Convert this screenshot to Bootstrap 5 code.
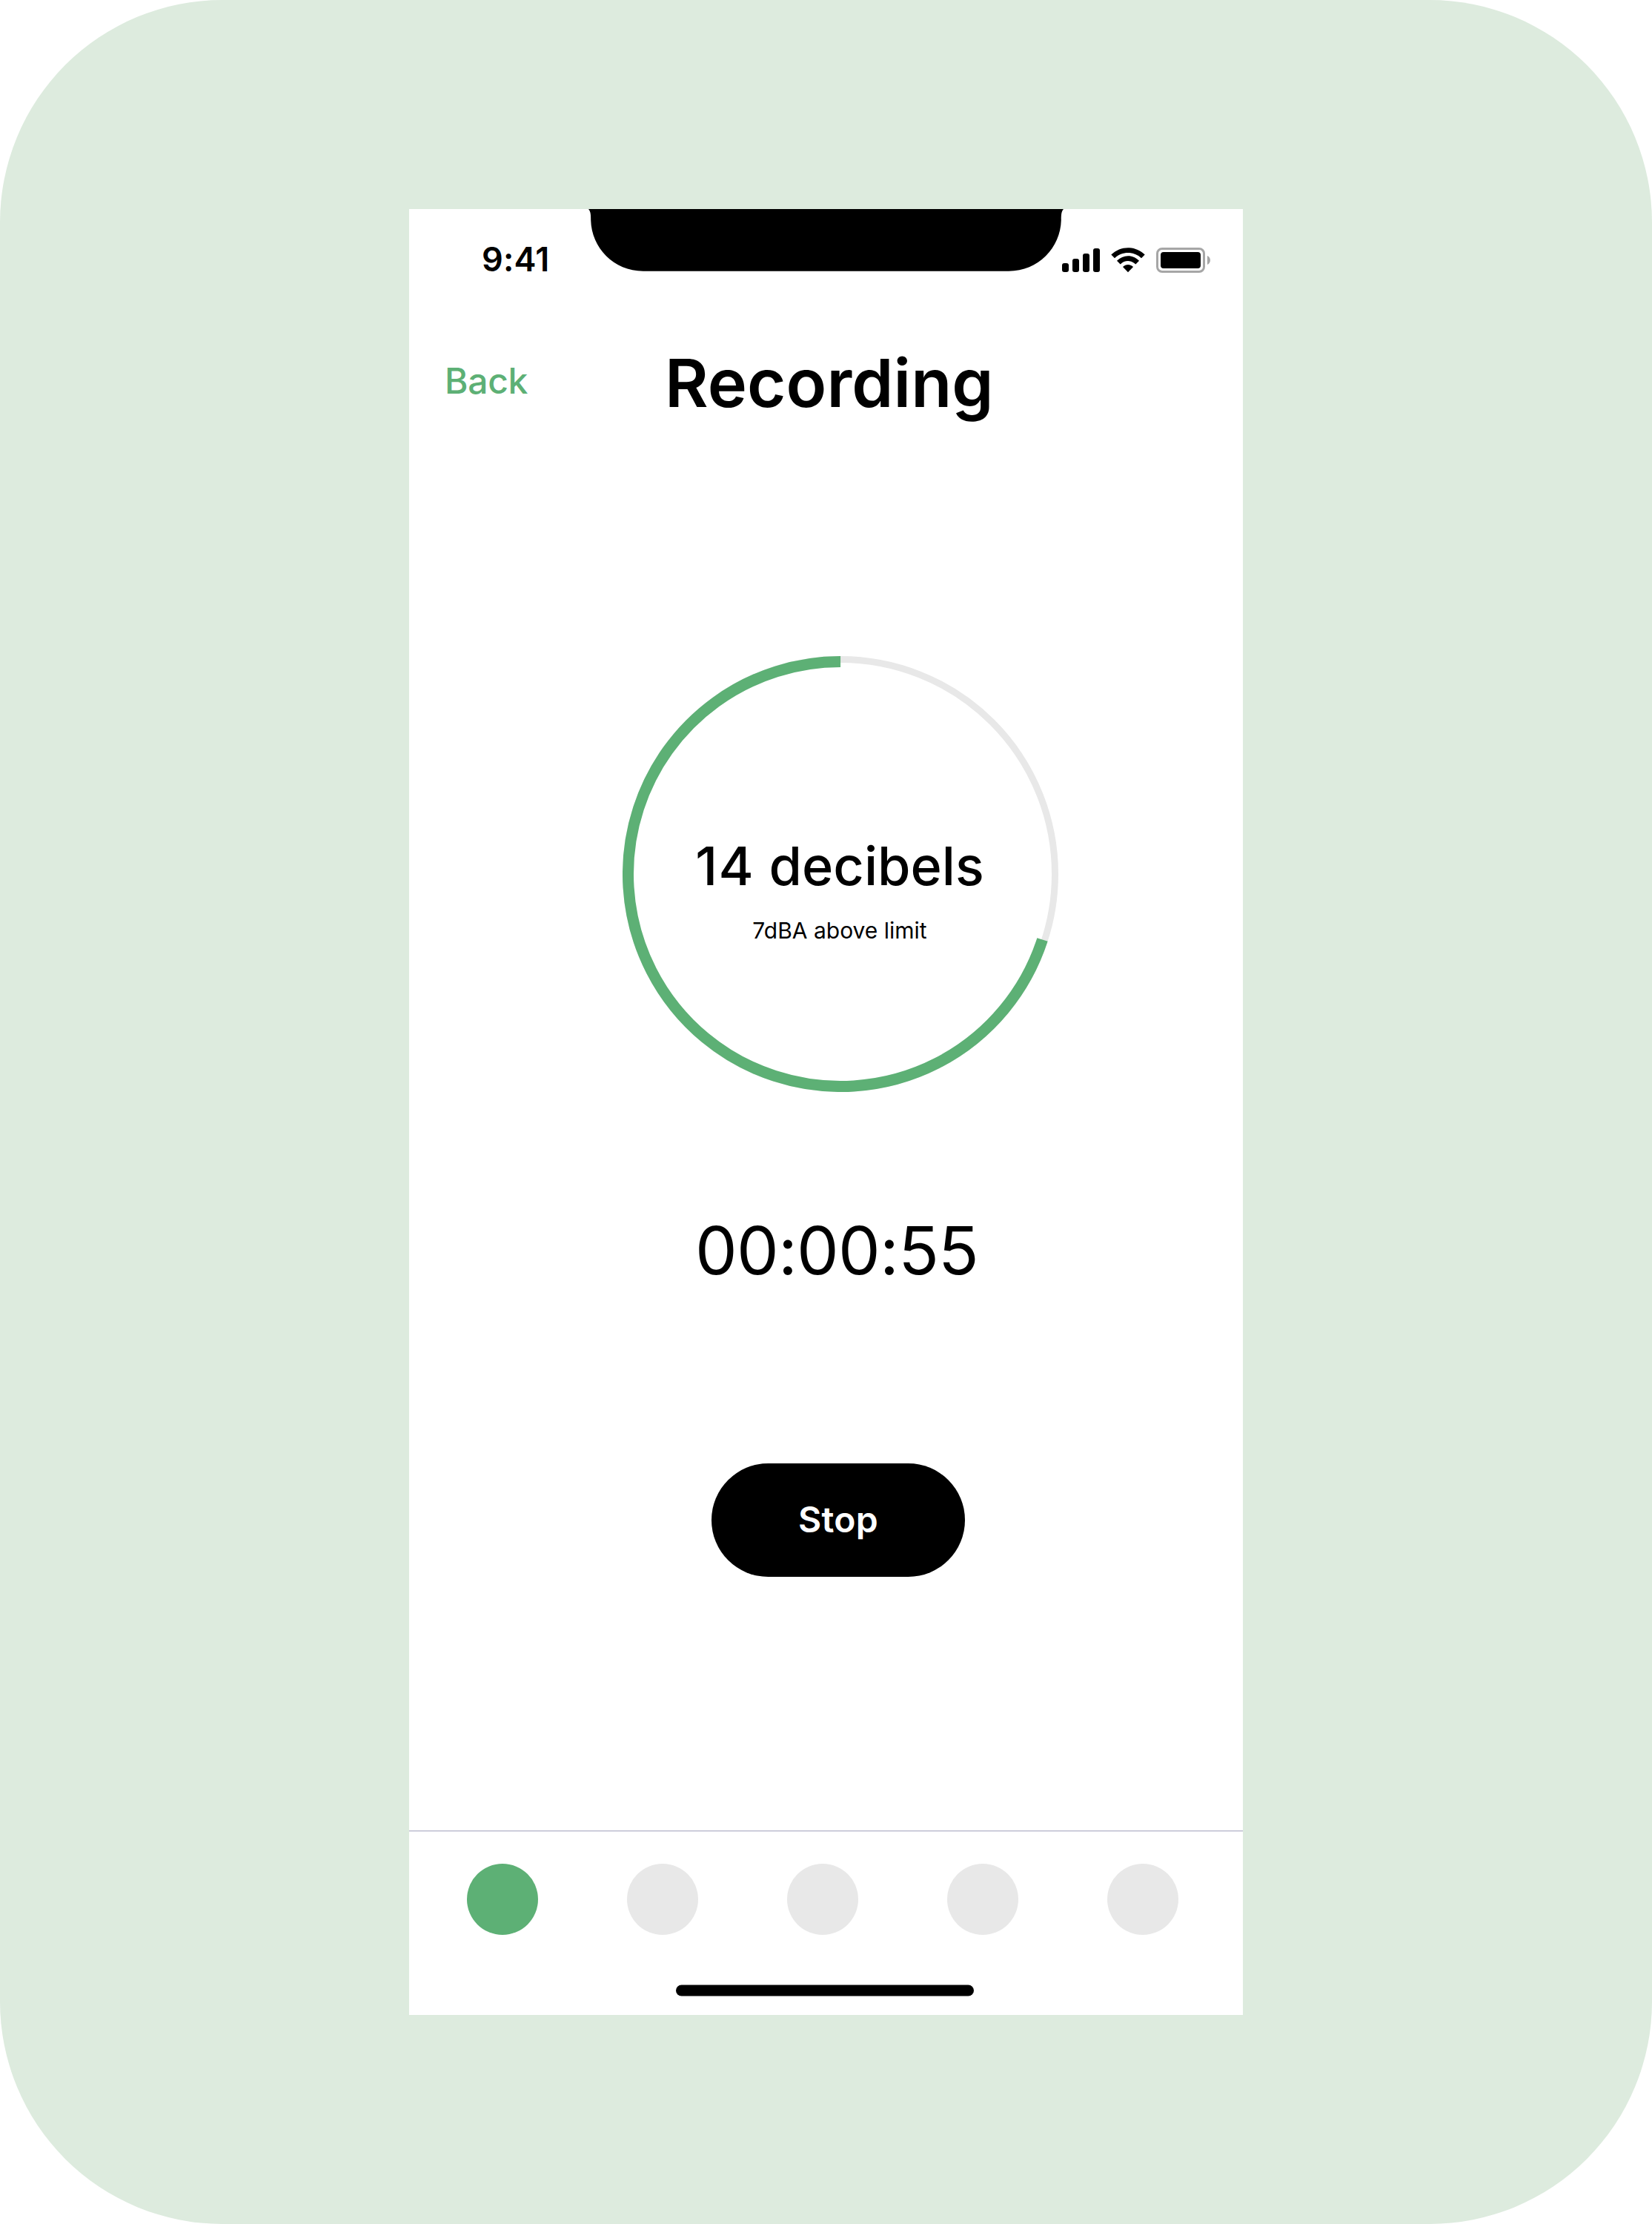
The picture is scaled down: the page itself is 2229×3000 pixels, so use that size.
<!DOCTYPE html>
<html lang="en">
<head>
<meta charset="utf-8">
<title>Recording</title>
<link href="https://cdn.jsdelivr.net/npm/bootstrap@5.3.0/dist/css/bootstrap.min.css" rel="stylesheet">
<style>
body{font-family:Inter,sans-serif;color:#000;background:#fff}
.stage{width:2229px;height:3000px;background:#ddebde;border-radius:300px;padding-top:282px}
.phone{width:1125px;height:2436px;margin-left:552px;background:#fff}
.status{height:132px;padding-left:98px}
.clock{font-size:45px;font-weight:600;line-height:54px;padding-top:41px;width:144px;letter-spacing:.2px}
.titlebar{height:198px}
.back{font-size:48px;font-weight:500;line-height:58px;color:#5db075;text-decoration:none;padding:71px 0 0 48px;width:345px;letter-spacing:-.3px}
.heading{font-size:90px;font-weight:600;line-height:110px;margin:48px 0 0;letter-spacing:.1px}
.dial{width:588px;height:588px;margin:273px 0 0 288px}
.reading{top:239px;left:-1px}
.level{font-size:72px;font-weight:500;line-height:87px}
.count{letter-spacing:1.5px}
.note{font-size:30px;line-height:36px;margin-top:26px}
.timer{font-size:90px;line-height:108px;margin:160px 0 0 386px;letter-spacing:-.8px}
.stop-btn,.stop-btn:hover{width:342px;height:153px;background:#000;color:#fff;font-size:48px;font-weight:600;letter-spacing:.3px;margin:233px 0 0 408px;padding:0 0 2px}
.tabs{height:249px;border-top:1px solid #bdbdcf;box-shadow:inset 0 1px #dedee8}
.dots{gap:120px;padding:44px 0 0 78px}
.dot{width:96px;height:96px;background:#e8e8e8}
.dot.on{background:#5db075}
.home{width:402px;margin:67px 0 0 360px}
</style>
<script src="https://cdn.jsdelivr.net/npm/bootstrap@5.3.0/dist/js/bootstrap.bundle.min.js"></script>
</head>
<body>
<main class="stage">
<section class="phone d-flex flex-column overflow-hidden">
  <header class="status d-flex flex-shrink-0">
    <div class="clock flex-shrink-0">9:41</div>
    <svg class="flex-shrink-0" width="639" height="84" viewBox="794 282 639 84" overflow="visible"><path d="M794 282C797 285 797.200 290 797.200 297C798 334 828 365.700 868 365.700H1361C1401 365.700 1431 334 1431.800 297C1431.800 290 1432 285 1435 282Z"/></svg>
    <svg class="flex-shrink-0" width="206" height="94" viewBox="1433 282 206 94">
      <rect x="1433" y="355" width="9" height="12" rx="3"/>
      <rect x="1447" y="349" width="9" height="18" rx="3"/>
      <rect x="1461" y="342" width="9" height="25" rx="3"/>
      <rect x="1475" y="335" width="9" height="32" rx="3"/>
      <path d="M1499.300 343.500C1512 331 1532 331 1544.700 343.500L1540 348.300C1530 338.600 1514 338.600 1504 348.300Z"/>
      <path d="M1507 351.700C1515.500 343 1528.500 343 1537 351.700L1532.300 356.500C1526.500 350.600 1517.500 350.600 1511.700 356.500Z"/>
      <path d="M1515 360C1519 356 1525 356 1529 360L1522 367.200Z"/>
      <rect x="1561.500" y="335.500" width="63" height="31" rx="6.500" fill="none" stroke="#a6a6a6" stroke-width="3"/>
      <rect x="1566" y="340" width="54" height="22" rx="4"/>
      <path d="M1629 345C1634.300 347 1634.300 355 1629 357Z" fill="#a6a6a6"/>
    </svg>
  </header>
  <nav class="titlebar d-flex flex-shrink-0"><a class="back" href="#">Back</a><h1 class="heading">Recording</h1></nav>
  <div class="dial position-relative flex-shrink-0">
    <svg class="d-block" width="588" height="588" viewBox="0 0 588 588" fill="none">
      <circle cx="294" cy="294" r="289.500" stroke="#e8e8e8" stroke-width="9"/>
      <circle cx="294" cy="294" r="286.500" stroke="#5db075" stroke-width="15" pathLength="100" stroke-dasharray="70 30" transform="rotate(18 294 294)"/>
    </svg>
    <div class="reading position-absolute w-100 text-center">
      <div class="level"><span class="count">14</span> decibels</div>
      <div class="note">7dBA above limit</div>
    </div>
  </div>
  <div class="timer">00:00:55</div>
  <button class="btn stop-btn rounded-pill border-0">Stop</button>
  <footer class="tabs mt-auto">
    <div class="dots d-flex"><span class="dot on rounded-circle"></span><span class="dot rounded-circle"></span><span class="dot rounded-circle"></span><span class="dot rounded-circle"></span><span class="dot rounded-circle"></span></div>
    <svg class="home d-block" height="16" viewBox="0 0 402 16"><rect y=".5" width="402" height="15" rx="7.500"/></svg>
  </footer>
</section>
</main>
</body>
</html>
